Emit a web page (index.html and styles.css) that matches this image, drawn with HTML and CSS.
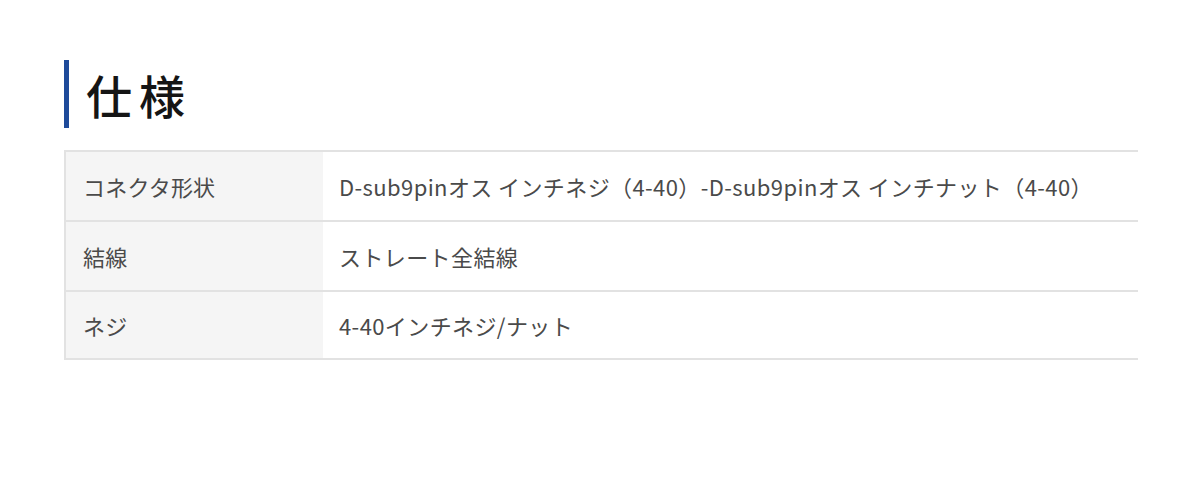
FILE: index.html
```html
<!DOCTYPE html>
<html lang="ja">
<head>
<meta charset="utf-8">
<link rel="stylesheet" href="styles.css">
</head>
<body>
<section class="spec">
  <h2 class="spec-title">仕様</h2>
  <table class="spec-table">
    <tr>
      <th>コネクタ形状</th>
      <td>D-sub9pinオス インチネジ（4-40）-D-sub9pinオス インチナット（4-40）</td>
    </tr>
    <tr>
      <th>結線</th>
      <td>ストレート全結線</td>
    </tr>
    <tr class="last">
      <th>ネジ</th>
      <td>4-40インチネジ/ナット</td>
    </tr>
  </table>
</section>
</body>
</html>
```
FILE: styles.css
```css
html, body {
  margin: 0;
  padding: 0;
  background: #ffffff;
}
body {
  font-family: "Noto Sans CJK JP", "Noto Sans", sans-serif;
}
.spec {
  padding: 60px 0 0 64px;
  width: 1074px;
}
.spec-title {
  margin: 0;
  height: 68px;
  display: flex;
  align-items: center;
  border-left: 5px solid #1e4a9a;
  padding-left: 17px;
  font-size: 46px;
  font-weight: 500;
  letter-spacing: 7px;
  color: #151515;
  line-height: 1;
}
.spec-table {
  margin-top: 22px;
  width: 100%;
  border-collapse: collapse;
  font-size: 22px;
  letter-spacing: 0.2px;
  color: #4a4a4a;
}
.spec-table tr {
  height: 70px;
  border-top: 2px solid #e2e2e2;
  border-bottom: 2px solid #e2e2e2;
}
.spec-table tr.last {
  height: 68px;
}
.spec-table th {
  width: 224px;
  text-align: left;
  font-weight: 400;
  background: #f5f5f5;
  border-left: 2px solid #e2e2e2;
  padding: 0 16px 0 17px;
}
.spec-table td {
  padding: 0 16px;
  background: #ffffff;
  letter-spacing: 0.4px;
}
```
